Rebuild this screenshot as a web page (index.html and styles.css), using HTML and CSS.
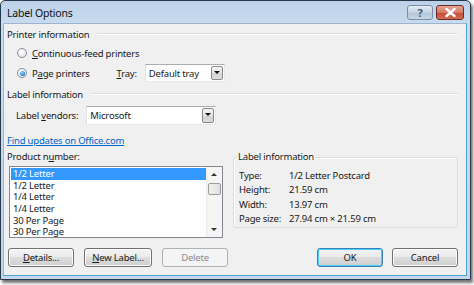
FILE: index.html
```html
<!DOCTYPE html>
<html>
<head>
<meta charset="utf-8">
<title>Label Options</title>
<link rel="stylesheet" href="styles.css">
</head>
<body>
<div class="window">
  <div class="titlebar">
    <span class="title">Label Options</span>
    <div class="caps">
      <span class="cap help">?</span>
      <span class="cap close"><svg width="11" height="9" viewBox="0 0 11 9"><path d="M1.5 1 L9.5 8 M9.5 1 L1.5 8" stroke="#fff" stroke-width="2.4" stroke-linecap="round"/></svg></span>
    </div>
  </div>
  <div class="client">
    <div class="head"><span>Printer information</span><span class="rule"></span></div>
    <div class="row radio-row r1"><span class="radio"></span><span><u>C</u>ontinuous-feed printers</span></div>
    <div class="row radio-row r2">
      <span class="radio on"></span><span class="pp">P<u>a</u>ge printers</span>
      <span class="tray-lbl"><u>T</u>ray:</span>
      <div class="combo tray"><span class="val">Default tray</span><span class="arrow"></span></div>
    </div>
    <div class="head h2"><span>Label information</span><span class="rule"></span></div>
    <div class="row vendors">
      <span class="vend-lbl">Label <u>v</u>endors:</span>
      <div class="combo vend"><span class="val">Microsoft</span><span class="arrow"></span></div>
    </div>
    <div class="lower">
      <div class="left">
        <a class="link">Find updates on Office.com</a>
        <div class="prod-lbl">Product n<u>u</u>mber:</div>
        <div class="listbox">
          <div class="items">
            <div class="item sel">1/2 Letter</div>
            <div class="item">1/2 Letter</div>
            <div class="item">1/4 Letter</div>
            <div class="item">1/4 Letter</div>
            <div class="item">30 Per Page</div>
            <div class="item">30 Per Page</div>
          </div>
          <div class="vscroll">
            <span class="sarrow up"></span>
            <span class="thumb"></span>
            <span class="sarrow down"></span>
          </div>
        </div>
      </div>
      <fieldset class="group">
        <legend>Label information</legend>
        <div class="info">
          <span>Type:</span><span>1/2 Letter Postcard</span>
          <span>Height:</span><span>21.59 cm</span>
          <span>Width:</span><span>13.97 cm</span>
          <span>Page size:</span><span>27.94 cm × 21.59 cm</span>
        </div>
      </fieldset>
    </div>
    <div class="buttons">
      <span class="btn"><u>D</u>etails...</span>
      <span class="btn"><u>N</u>ew Label...</span>
      <span class="btn disabled">Delete</span>
      <span class="spacer"></span>
      <span class="btn default">OK</span>
      <span class="btn">Cancel</span>
    </div>
  </div>
</div>
</body>
</html>
```

FILE: styles.css
```css
html, body {
  margin: 0;
  padding: 0;
  background: #ffffff;
}
body {
  width: 474px;
  height: 285px;
  overflow: hidden;
  font-family: "Noto Sans", "Open Sans", sans-serif;
  font-size: 9.5px;
  letter-spacing: -0.2px;
  color: #1a1a1a;
}
u { text-decoration: underline; text-underline-offset: 1px; }

.window {
  width: 471px;
  height: 280px;
  box-sizing: border-box;
  border: 1px solid #25384c;
  border-radius: 5px 5px 0 0;
  background: linear-gradient(#bcd1e8, #c8dbef 22px, #c3d6ea);
  padding: 0 3px 3px 2px;
  display: flex;
  flex-direction: column;
  box-shadow: 2px 3px 3px rgba(0,0,0,0.55);
}
.titlebar {
  height: 22px;
  display: flex;
  align-items: center;
  padding-left: 4px;
}
.title {
  font-size: 10.5px;
  letter-spacing: -0.2px;
  color: #111;
  flex: 1;
  margin-top: 2px;
}
.caps {
  display: flex;
  gap: 3px;
  margin-right: 3px;
  margin-top: 1px;
}
.cap {
  height: 15px;
  box-sizing: border-box;
  border-radius: 3px;
  display: flex;
  align-items: center;
  justify-content: center;
}
.help {
  width: 26px;
  border: 1px solid #7b8ea5;
  background: linear-gradient(#e3ebf4, #c5d3e3 50%, #b3c4d8 51%, #c9d7e6);
  color: #44586f;
  font-size: 11px;
  font-weight: bold;
  line-height: 13px;
}
.close {
  width: 28px;
  border: 1px solid #6e2a22;
  background: linear-gradient(#e6a394, #d57a68 50%, #c24a36 51%, #d06d56);
}

.client {
  flex: 1;
  background: #f0f0f0;
  border: 1px solid #9db5cf;
  border-right-color: #4aa3d6;
  border-bottom-color: #4aa3d6;
  padding: 0 8px 0 3px;
  display: flex;
  flex-direction: column;
}
.head {
  display: flex;
  align-items: center;
  height: 14px;
  margin-top: 3px;
}
.head .rule {
  flex: 1;
  height: 0;
  border-top: 1px solid #d5dfe5;
  border-bottom: 1px solid #ffffff;
  margin-left: 8px;
  margin-right: 0;
}
.h2 { margin-top: 5px; }
.row {
  display: flex;
  align-items: center;
}
.radio-row { padding-left: 10px; }
.r1 { height: 14px; margin-top: 5px; }
.r2 { height: 18px; margin-top: 4px; }
.radio {
  width: 10px;
  height: 10px;
  box-sizing: border-box;
  border-radius: 50%;
  border: 1px solid #8a8e95;
  background: radial-gradient(circle at 40% 35%, #ffffff, #d9dde2);
  margin-right: 5px;
  position: relative;
}
.radio.on::after {
  content: "";
  position: absolute;
  left: 1.5px;
  top: 1.5px;
  width: 5px;
  height: 5px;
  border-radius: 50%;
  background: radial-gradient(circle at 40% 35%, #a9dcff, #1f7ed0 70%, #10589a);
}
.pp { white-space: nowrap; }
.tray-lbl { margin-left: 27px; }
.combo {
  height: 18px;
  box-sizing: border-box;
  background: #fff;
  border: 1px solid #abadb3;
  border-color: #abadb3 #e3e9ef #e3e9ef #e2e3ea;
  display: flex;
  align-items: center;
  padding: 1px;
}
.combo .val { flex: 1; padding-left: 2px; }
.combo .arrow {
  width: 12px;
  height: 14px;
  box-sizing: border-box;
  border: 1px solid #8a8a8a;
  border-radius: 2px;
  background: linear-gradient(#f4f4f4, #e4e4e4 50%, #d2d2d2 51%, #dcdcdc);
  position: relative;
}
.combo .arrow::after {
  content: "";
  position: absolute;
  left: 2px;
  top: 4px;
  border-left: 3px solid transparent;
  border-right: 3px solid transparent;
  border-top: 3px solid #111;
}
.tray { width: 80px; margin-left: 8px; }
.vendors { height: 19px; margin-top: 5px; padding-left: 9px; }
.vend .arrow { height: 15px; }
.vend { width: 130px; height: 19px; margin-left: 8px; }

.lower {
  display: flex;
  align-items: flex-start;
}
.left {
  display: flex;
  flex-direction: column;
  width: 216px;
}
.link {
  color: #0066cc;
  text-decoration: underline;
  height: 14px;
  line-height: 14px;
  margin-top: 9px;
}
.prod-lbl {
  height: 14px;
  line-height: 14px;
  margin-top: 2px;
}
.listbox {
  margin-top: 2px;
  margin-left: 2px;
  height: 72px;
  width: 214px;
  box-sizing: border-box;
  border: 1px solid #828790;
  background: #fff;
  display: flex;
  padding: 1px 0 1px 1px;
}
.items { flex: 1; }
.item {
  height: 11.7px;
  line-height: 11.7px;
  padding-left: 2px;
  white-space: nowrap;
}
.item.sel {
  background: #3399ff;
  color: #fff;
}
.vscroll {
  width: 15px;
  background: #f5f5f5;
  border-left: 1px solid #ececec;
  position: relative;
  margin-top: -1px;
  margin-bottom: -1px;
}
.sarrow {
  position: absolute;
  left: 4px;
  border-left: 3px solid transparent;
  border-right: 3px solid transparent;
}
.sarrow.up { top: 6px; border-bottom: 3px solid #333; }
.sarrow.down { bottom: 6px; border-top: 3px solid #333; }
.thumb {
  position: absolute;
  left: 1px;
  top: 16px;
  width: 13px;
  height: 12px;
  box-sizing: border-box;
  border: 1px solid #9a9a9a;
  border-radius: 2px;
  background: linear-gradient(90deg, #f2f2f2, #e0e0e0);
}

.group {
  margin: 26px 0 0 10px;
  width: 225px;
  height: 77px;
  box-sizing: border-box;
  border: 1px solid #d5dfe5;
  border-radius: 3px;
  box-shadow: inset 1px 1px 0 #fff;
  padding: 0 0 0 5px;
}
.group legend {
  padding: 0 1px;
  margin-left: -2px;
  line-height: 12px;
}
.info {
  display: grid;
  grid-template-columns: 50px auto;
  grid-auto-rows: 14.5px;
  align-items: center;
  margin-top: 5px;
}

.buttons {
  display: flex;
  gap: 10px;
  margin-top: 10px;
  padding-left: 1px;
}
.spacer { flex: 1; }
.btn {
  width: 66px;
  height: 19px;
  box-sizing: border-box;
  border: 1px solid #707070;
  border-radius: 3px;
  background: linear-gradient(#f3f3f3, #ebebeb 45%, #dddddd 50%, #cfcfcf);
  box-shadow: inset 0 0 0 1px #fcfcfc;
  display: flex;
  align-items: center;
  justify-content: center;
}
.btn:nth-child(2) { width: 68px; }
.btn.disabled {
  border-color: #adb2b5;
  background: #f4f4f4;
  color: #8d8d8d;
  box-shadow: none;
}
.btn.default {
  border-color: #3c7fb1;
  box-shadow: inset 0 0 0 1px #48d1ff;
  margin-right: -1px;
}
```
